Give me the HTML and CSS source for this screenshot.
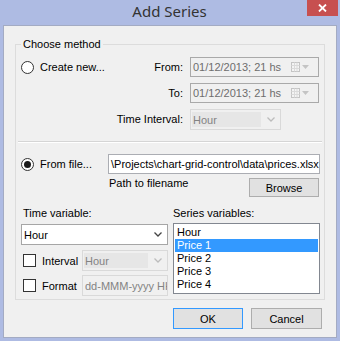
FILE: index.html
```html
<!DOCTYPE html>
<html lang="en">
<head>
    <meta charset="utf-8">
    <title>Add Series</title>
    <link rel="stylesheet" href="styles.css">
</head>
<body>
    <div class="window">
        <!-- Barre de titre -->
        <div class="titlebar">
            <span class="title">Add Series</span>
            <div class="close">
                <svg width="9" height="8" viewBox="0 0 9 8"><path d="M1 0.5 L8 7.5 M8 0.5 L1 7.5" stroke="#fff" stroke-width="1.8" fill="none"/></svg>
            </div>
        </div>

        <div class="client">
            <div class="group">
                <span class="legend">Choose method</span>

                <!-- Nouvelle serie -->
                <div class="create">
                    <label class="radio-row"><span class="radio"></span>Create new...</label>
                    <span class="lbl">From:</span>
                    <div class="date">
                        <span class="val">01/12/2013; 21 hs</span>
                        <svg class="cal" width="20" height="10" viewBox="0 0 20 10">
                            <rect x="0.5" y="0.5" width="8" height="9" fill="#f4f4f4" stroke="#c4c4c4"/>
                            <path d="M0.5 3.5 H8.5 M0.5 6.5 H8.5 M3.5 0.5 V9.5 M6 0.5 V9.5" stroke="#dadada"/>
                            <path d="M11 3 H18 L14.5 7 Z" fill="#c4c4c4"/>
                        </svg>
                    </div>
                    <span class="lbl">To:</span>
                    <div class="date">
                        <span class="val">01/12/2013; 21 hs</span>
                        <svg class="cal" width="20" height="10" viewBox="0 0 20 10">
                            <rect x="0.5" y="0.5" width="8" height="9" fill="#f4f4f4" stroke="#c4c4c4"/>
                            <path d="M0.5 3.5 H8.5 M0.5 6.5 H8.5 M3.5 0.5 V9.5 M6 0.5 V9.5" stroke="#dadada"/>
                            <path d="M11 3 H18 L14.5 7 Z" fill="#c4c4c4"/>
                        </svg>
                    </div>
                    <span class="lbl">Time Interval:</span>
                    <div class="combo disabled interval">
                        <span class="val">Hour</span>
                        <svg class="arrow" width="8" height="5" viewBox="0 0 8 5"><path d="M0.5 0.5 L4 4 L7.5 0.5" stroke="#bcbcbc" stroke-width="1.3" fill="none"/></svg>
                    </div>
                </div>

                <div class="sep"></div>

                <!-- Depuis un fichier -->
                <div class="file">
                    <label class="radio-row"><span class="radio checked"></span>From file...</label>
                    <div class="textbox path">\Projects\chart-grid-control\data\prices.xlsx</div>
                    <div></div>
                    <div class="path-row">
                        <span class="hint">Path to filename</span>
                        <button class="btn browse">Browse</button>
                    </div>
                </div>

                <!-- Variables -->
                <div class="vars">
                    <div class="col">
                        <div class="cap">Time variable:</div>
                        <div class="combo time">
                            <span class="val">Hour</span>
                            <svg class="arrow" width="8" height="5" viewBox="0 0 8 5"><path d="M0.5 0.5 L4 4 L7.5 0.5" stroke="#444" stroke-width="1.3" fill="none"/></svg>
                        </div>
                        <div class="opt first">
                            <span class="check"></span>
                            <span class="opt-lbl">Interval</span>
                            <div class="combo disabled small">
                                <span class="val">Hour</span>
                                <svg class="arrow" width="8" height="5" viewBox="0 0 8 5"><path d="M0.5 0.5 L4 4 L7.5 0.5" stroke="#bcbcbc" stroke-width="1.3" fill="none"/></svg>
                            </div>
                        </div>
                        <div class="opt">
                            <span class="check"></span>
                            <span class="opt-lbl">Format</span>
                            <div class="textbox disabled small">dd-MMM-yyyy HH</div>
                        </div>
                    </div>
                    <div class="col">
                        <div class="cap">Series variables:</div>
                        <ul class="list">
                            <li>Hour</li>
                            <li class="sel">Price 1</li>
                            <li>Price 2</li>
                            <li>Price 3</li>
                            <li>Price 4</li>
                        </ul>
                    </div>
                </div>
            </div>

            <div class="buttons">
                <button class="btn default">OK</button>
                <button class="btn cancel">Cancel</button>
            </div>
        </div>
    </div>
</body>
</html>
```

FILE: styles.css
```css
/* Fenetre de dialogue facon Windows 8 */
body {
    margin: 0;
    font-family: "Liberation Sans", Arial, sans-serif;
    font-size: 11px;
    color: #000;
}

.window {
    width: 340px;
    height: 341px;
    background-color: #aebbe3;
    display: flex;
    flex-direction: column;
}

.titlebar {
    height: 25px;
    flex: none;
    position: relative;
    display: flex;
    justify-content: center;
    align-items: center;
}

    .titlebar .title {
        font-family: "Noto Sans", "Open Sans", sans-serif;
        font-size: 15px;
        color: #333;
        margin-top: -3px;
        margin-left: -1px;
    }

    .titlebar .close {
        position: absolute;
        top: 0;
        right: 2px;
        width: 31px;
        height: 16px;
        background-color: #c75050;
        display: flex;
        justify-content: center;
        align-items: center;
    }

.client {
    flex: 1;
    margin: 0 3px 3px;
    border: 1px solid #a3abc3;
    background-color: #f0f0f0;
}

/* Cadre "Choose method" */
.group {
    position: relative;
    margin: 18px 11px 0 11px;
    height: 256px;
    box-sizing: border-box;
    border: 1px solid #dcdcdc;
}

    .group .legend {
        position: absolute;
        top: -7px;
        left: 5px;
        padding: 0 2px;
        line-height: 13px;
        background-color: #f0f0f0;
    }

.radio-row {
    display: flex;
    align-items: center;
    gap: 6px;
    white-space: nowrap;
}

.radio {
    width: 11px;
    height: 11px;
    border: 1px solid #333;
    border-radius: 50%;
    background-color: #fff;
    display: flex;
    justify-content: center;
    align-items: center;
    flex: none;
}

    .radio.checked::after {
        content: "";
        width: 7px;
        height: 7px;
        border-radius: 50%;
        background-color: #1a1a1a;
    }

.create {
    margin-top: 12px;
    padding: 0 5px;
    display: grid;
    grid-template-columns: 1fr 66px 129px;
    grid-auto-rows: 20px;
    column-gap: 7px;
    row-gap: 6px;
    align-items: center;
}

    .create .radio-row {
        grid-column: 1;
        grid-row: 1;
    }

    .create .lbl {
        grid-column: 2;
        justify-self: end;
        white-space: nowrap;
    }

    .create .date,
    .create .combo {
        grid-column: 3;
    }

.date {
    height: 20px;
    box-sizing: border-box;
    border: 1px solid #a9a9a9;
    background-color: #f0f0f0;
    display: flex;
    align-items: center;
    padding-left: 2px;
    color: #6d6d6d;
    white-space: nowrap;
}

    .date .val {
        flex: 1;
    }

    .date .cal {
        margin-right: 7px;
    }

.combo {
    height: 21px;
    box-sizing: border-box;
    border: 1px solid #a6a6a6;
    background-color: #fff;
    display: flex;
    align-items: center;
    padding-left: 1px;
}

    .combo .val {
        flex: 1;
        padding-left: 1px;
    }

    .combo .arrow {
        margin: 0 5px 0 6px;
    }

    .combo.disabled {
        border-color: #d9d9d9;
        background-color: #f0f0f0;
        color: #838383;
    }

        .combo.disabled .val {
            align-self: stretch;
            margin: 2px 0;
            display: flex;
            align-items: center;
            background-color: #e6e6e6;
        }

    .combo.interval {
        width: 91px;
        align-self: start;
    }

.sep {
    margin: 12px 2px 0;
    border-top: 1px solid #d5d5d5;
    border-bottom: 1px solid #fff;
}

.file {
    margin-top: 11px;
    padding: 0 4px 0 5px;
    display: grid;
    grid-template-columns: 1fr 212px;
}

.textbox {
    height: 20px;
    box-sizing: border-box;
    border: 1px solid #abadb3;
    background-color: #fff;
    padding-left: 2px;
    display: flex;
    align-items: center;
    white-space: nowrap;
    overflow: hidden;
}

    .textbox.disabled {
        border-color: #d9d9d9;
        background-color: #f0f0f0;
        color: #838383;
    }

.path-row {
    display: flex;
    justify-content: space-between;
    align-items: flex-start;
}

    .path-row .hint {
        margin: 3px 0 0 1px;
        line-height: 13px;
    }

.btn {
    font-family: "Liberation Sans", Arial, sans-serif;
    font-size: 11px;
    color: #000;
    background-color: #e1e1e1;
    border: 1px solid #adadad;
    padding: 0;
    margin: 0;
}

    .btn.browse {
        width: 70px;
        height: 19px;
        margin: 4px 1px 0 0;
    }

/* Variables de temps et series */
.vars {
    margin-top: 10px;
    padding: 0 4px 0 5px;
    display: grid;
    grid-template-columns: 147px 147px;
    column-gap: 5px;
}

    .vars .cap {
        line-height: 13px;
        padding-left: 2px;
    }

    .vars .col:last-child .cap {
        padding-left: 0;
    }

.combo.time {
    margin-top: 4px;
}

.opt {
    display: flex;
    align-items: center;
    margin-top: 4px;
}

    .opt.first {
        margin-top: 5px;
    }

    .opt .check {
        width: 11px;
        height: 11px;
        border: 1px solid #333;
        background-color: #fff;
        margin-left: 2px;
        flex: none;
    }

    .opt .opt-lbl {
        margin-left: 6px;
    }

    .opt .small {
        width: 86px;
        height: 21px;
        margin-left: auto;
    }

.list {
    list-style: none;
    margin: 3px 0 0;
    padding: 2px 1px 0;
    height: 71px;
    box-sizing: border-box;
    border: 1px solid #828790;
    background-color: #fff;
}

    .list li {
        height: 13px;
        line-height: 13px;
        padding-left: 2px;
    }

        .list li.sel {
            background-color: #3399ff;
            color: #fff;
        }

.buttons {
    display: flex;
    justify-content: flex-end;
    gap: 8px;
    margin: 8px 14px 0 0;
}

    .buttons .btn {
        height: 21px;
        width: 70px;
    }

        .buttons .btn.cancel {
            width: 71px;
        }

        .buttons .btn.default {
            border-color: #3399ff;
        }
```
